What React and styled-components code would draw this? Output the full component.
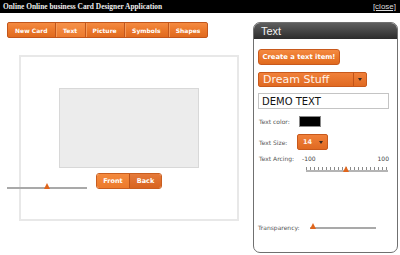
import styled, { createGlobalStyle } from "styled-components";

const Global = createGlobalStyle`
  html, body {
    margin: 0;
    padding: 0;
    background: #fff;
    font-family: "DejaVu Sans", Verdana, sans-serif;
  }
`;

const orange = "linear-gradient(#f48a41 0%, #ec7a2e 45%, #e06a1e 100%)";

const TopBar = styled.div`
  height: 13px;
  background: #000;
  display: flex;
  align-items: center;
  justify-content: space-between;
  padding: 0 4px 0 3px;
`;

const Title = styled.span`
  font-family: "Liberation Serif", "Times New Roman", serif;
  font-weight: bold;
  font-size: 7.4px;
  color: #eee;
`;

const Close = styled.a`
  font-family: "Liberation Sans", Arial, sans-serif;
  font-size: 8px;
  color: #ddd;
  text-decoration: underline;
`;

const Main = styled.div`
  display: flex;
  align-items: flex-start;
`;

const Workspace = styled.div`
  width: 246px;
  padding: 9px 0 0 7px;
`;

const Tabs = styled.div`
  display: flex;
  width: 201px;
  height: 16px;
  box-sizing: border-box;
  border: 1px solid #c2561c;
  border-radius: 2px;
  background: ${orange};
  overflow: hidden;
`;

const Tab = styled.div`
  width: ${(p) => p.$w}px;
  display: flex;
  align-items: center;
  justify-content: center;
  font-size: 6px;
  font-weight: bold;
  color: #fff;
  border-left: ${(p) => (p.$first ? "none" : "1px solid #c2561c")};
  box-shadow: ${(p) => (p.$first ? "none" : "inset 1px 0 #f59a5a")};
  background: ${(p) => (p.$active ? "linear-gradient(#f6914a, #ec7a2e)" : "none")};
`;

const Stage = styled.div`
  position: relative;
  margin: 17px 0 0 12px;
  width: 220px;
  height: 166px;
  box-sizing: border-box;
  border: 2px solid #e8e8e8;
  display: flex;
  flex-direction: column;
  align-items: center;
  padding-top: 31px;
`;

const CardFace = styled.div`
  width: 140px;
  height: 80px;
  box-sizing: border-box;
  background: #ececec;
  border: 1px solid #d8d8d8;
`;

const FaceSwitch = styled.div`
  margin-top: 5px;
  display: flex;
  height: 16px;
  border: 1px solid #c95e20;
  border-radius: 3px;
  overflow: hidden;
  box-sizing: border-box;
`;

const FaceButton = styled.div`
  width: ${(p) => p.$w}px;
  display: flex;
  align-items: center;
  justify-content: center;
  font-size: 6.5px;
  font-weight: bold;
  color: #fff;
  background: ${(p) =>
    p.$active
      ? "linear-gradient(#f48a3e, #ec7a2c)"
      : "linear-gradient(#e57a3a, #d8631f)"};
  border-left: ${(p) => (p.$active ? "none" : "1px solid #b9521a")};
`;

const Track = styled.div`
  position: relative;
  width: ${(p) => p.$w}px;
  height: 2px;
  background: #a9a9a9;
`;

const ZoomSlider = styled.div`
  position: absolute;
  left: -14px;
  top: 130px;
`;

const Thumb = styled.div`
  position: absolute;
  left: ${(p) => p.$at}px;
  top: -4px;
  width: 0;
  height: 0;
  border-left: 3px solid transparent;
  border-right: 3px solid transparent;
  border-bottom: 6px solid #e0651c;
`;

const Panel = styled.div`
  margin-top: 9px;
  width: 145px;
  height: 231px;
  box-sizing: border-box;
  border: 1px solid #707070;
  border-radius: 7px;
  overflow: hidden;
`;

const PanelHead = styled.div`
  height: 16px;
  background: linear-gradient(#5e5e5e, #2c2c2c);
  color: #f2f2f2;
  font-family: "Liberation Sans", Arial, sans-serif;
  font-size: 11px;
  display: flex;
  align-items: center;
  padding-left: 7px;
`;

const PanelBody = styled.div`
  display: flex;
  flex-direction: column;
  align-items: flex-start;
  padding: 10px 0 0 4px;
`;

const OrangeButton = styled.div`
  width: 82px;
  height: 16px;
  box-sizing: border-box;
  border: 1px solid #c8591c;
  border-radius: 3px;
  background: ${orange};
  color: #fff;
  font-size: 6.8px;
  font-weight: bold;
  display: flex;
  align-items: center;
  justify-content: center;
`;

const Select = styled.div`
  margin-top: ${(p) => p.$mt || 0}px;
  width: ${(p) => p.$w}px;
  height: ${(p) => p.$h}px;
  box-sizing: border-box;
  border: 1px solid #c8591c;
  border-radius: 2px;
  background: linear-gradient(#f0803a, #e06a22);
  display: flex;
  align-items: stretch;
  color: #fff3ea;
`;

const SelectValue = styled.div`
  flex: 1;
  display: flex;
  align-items: center;
  padding-left: ${(p) => p.$pl}px;
  font-size: ${(p) => p.$fs}px;
  font-weight: ${(p) => (p.$bold ? "bold" : "normal")};
`;

const SelectArrow = styled.div`
  width: ${(p) => p.$w}px;
  display: flex;
  align-items: center;
  justify-content: center;
  border-left: ${(p) => (p.$split ? "1px solid #c15418" : "none")};
  &::after {
    content: "";
    border-left: 2px solid transparent;
    border-right: 2px solid transparent;
    border-top: 3px solid #3a2a20;
  }
`;

const TextInput = styled.div`
  margin-top: 6px;
  width: 131px;
  height: 16px;
  box-sizing: border-box;
  border: 1px solid #c4c4c4;
  padding-left: 3px;
  display: flex;
  align-items: center;
  font-size: 10px;
  color: #111;
`;

const Row = styled.div`
  margin-top: ${(p) => p.$mt}px;
  display: flex;
  align-items: center;
  padding-left: 1px;
`;

const Label = styled.div`
  width: ${(p) => p.$w || 39}px;
  font-size: 6px;
  color: #555;
`;

const Swatch = styled.div`
  margin-left: 1px;
  width: 22px;
  height: 11px;
  box-sizing: border-box;
  background: #000;
  border: 1px solid #888;
`;

const ArcBlock = styled.div`
  margin-top: 5px;
  display: flex;
  align-items: flex-start;
  padding-left: 1px;
`;

const Scale = styled.div`
  width: 87px;
  margin-left: 4px;
  display: flex;
  flex-direction: column;
`;

const ScaleLabels = styled.div`
  display: flex;
  justify-content: space-between;
  font-size: 6px;
  color: #444;
`;

const Ticks = styled.div`
  margin: 5px 0 0 4px;
  width: 82px;
  height: 3px;
  background: repeating-linear-gradient(
    to right,
    #8a8a8a 0 1px,
    transparent 1px 4px
  );
`;

const ArcTrack = styled(Track)`
  margin-left: 4px;
  width: 82px;
  margin-top: 0;
  background: #b4b4b4;
`;

const TransRow = styled.div`
  margin-top: 52px;
  display: flex;
  align-items: center;
`;

export default function App() {
  return (
    <>
      <Global />
      <TopBar>
        <Title>Online Online business Card Designer Application</Title>
        <Close>[close]</Close>
      </TopBar>
      <Main>
        <Workspace>
          <Tabs>
            <Tab $w={48} $first>New Card</Tab>
            <Tab $w={30} $active>Text</Tab>
            <Tab $w={39}>Picture</Tab>
            <Tab $w={45}>Symbols</Tab>
            <Tab $w={39}>Shapes</Tab>
          </Tabs>
          <Stage>
            <CardFace />
            <FaceSwitch>
              <FaceButton $w={32} $active>Front</FaceButton>
              <FaceButton $w={31}>Back</FaceButton>
            </FaceSwitch>
            <ZoomSlider>
              <Track $w={80}>
                <Thumb $at={37} />
              </Track>
            </ZoomSlider>
          </Stage>
        </Workspace>
        <Panel>
          <PanelHead>Text</PanelHead>
          <PanelBody>
            <OrangeButton>Create a text item!</OrangeButton>
            <Select $mt={7} $w={109} $h={15}>
              <SelectValue $pl={4} $fs={11}>Dream Stuff</SelectValue>
              <SelectArrow $w={12} $split />
            </Select>
            <TextInput>DEMO TEXT</TextInput>
            <Row $mt={7}>
              <Label>Text color:</Label>
              <Swatch />
            </Row>
            <Row $mt={7}>
              <Label $w={38}>Text Size:</Label>
              <Select $w={31} $h={16}>
                <SelectValue $pl={5} $fs={6.5} $bold>14</SelectValue>
                <SelectArrow $w={12} />
              </Select>
            </Row>
            <ArcBlock>
              <Label $w={39}>Text Arcing:</Label>
              <Scale>
                <ScaleLabels>
                  <span>-100</span>
                  <span>100</span>
                </ScaleLabels>
                <Ticks />
                <ArcTrack>
                  <Thumb $at={37} />
                </ArcTrack>
              </Scale>
            </ArcBlock>
            <TransRow>
              <Label $w={52}>Transparency:</Label>
              <Track $w={66}>
                <Thumb $at={0} />
              </Track>
            </TransRow>
          </PanelBody>
        </Panel>
      </Main>
    </>
  );
}
